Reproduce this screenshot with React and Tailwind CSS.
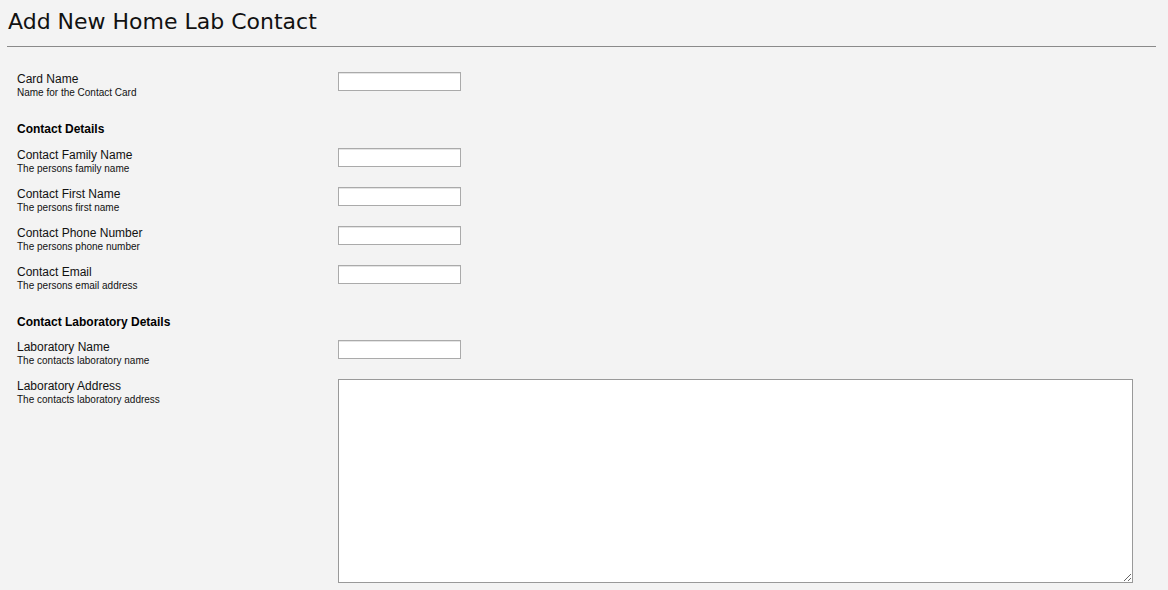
import React from 'react';

const sans = { fontFamily: '"Liberation Sans", Arial, sans-serif' };

function Field({ label, hint, children }) {
  return (
    <div className="mb-[12px] flex items-start">
      <div className="w-[321px] shrink-0">
        <div className="text-[12px] leading-[14px] text-[#111]">{label}</div>
        <div className="pt-px text-[10px] leading-[12px] text-[#111]">{hint}</div>
      </div>
      {children}
    </div>
  );
}

function TextBox() {
  return (
    <input
      type="text"
      className="h-[19px] w-[123px] border border-[#aaa] bg-white px-1 text-[12px] shadow-[inset_0_1px_0_#e4e4e4] outline-none"
    />
  );
}

export default function App() {
  return (
    <div className="min-h-[590px] bg-[#f3f3f3] px-[7px] pr-[12px] text-black" style={sans}>
      <h1
        className="pl-[1px] pt-[9px] text-[22px] font-normal leading-[26px] text-[#111]"
        style={{ fontFamily: '"DejaVu Sans", Verdana, sans-serif' }}
      >
        Add New Home Lab Contact
      </h1>
      <div className="mt-[11px] h-px bg-[#8a8a8a]" />

      <form className="flex flex-col pl-[10px] pt-[25px]" onSubmit={(event) => event.preventDefault()}>
        <Field label="Card Name" hint="Name for the Contact Card">
          <TextBox />
        </Field>

        <h2 className="mb-[12px] mt-[11px] text-[12px] font-bold leading-[14px]">Contact Details</h2>
        <Field label="Contact Family Name" hint="The persons family name">
          <TextBox />
        </Field>
        <Field label="Contact First Name" hint="The persons first name">
          <TextBox />
        </Field>
        <Field label="Contact Phone Number" hint="The persons phone number">
          <TextBox />
        </Field>
        <Field label="Contact Email" hint="The persons email address">
          <TextBox />
        </Field>

        <h2 className="mb-[11px] mt-[11px] text-[12px] font-bold leading-[14px]">Contact Laboratory Details</h2>
        <Field label="Laboratory Name" hint="The contacts laboratory name">
          <TextBox />
        </Field>
        <div className="flex items-start">
          <div className="w-[321px] shrink-0">
            <div className="text-[12px] leading-[14px] text-[#111]">Laboratory Address</div>
            <div className="pt-px text-[10px] leading-[12px] text-[#111]">The contacts laboratory address</div>
          </div>
          <textarea className="h-[204px] w-[795px] border border-[#999] bg-white p-1 text-[12px] outline-none" />
        </div>
      </form>
    </div>
  );
}
